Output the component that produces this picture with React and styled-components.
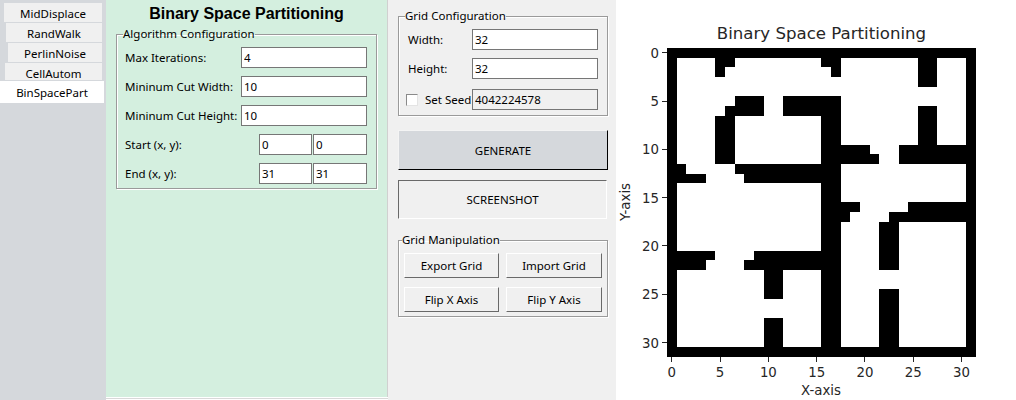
import * as React from "react";
import styled, { createGlobalStyle } from "styled-components";

const GlobalStyle = createGlobalStyle`
  html, body { margin: 0; padding: 0; background: #fff; }
  body { font-family: "Noto Sans", "Open Sans", sans-serif; font-size: 11.5px; color: #000; }
`;

const Page = styled.div`
  display: flex;
  width: 1016px;
  height: 400px;
  overflow: hidden;
`;

const Sidebar = styled.nav`
  width: 106px;
  flex: none;
  background: #d5d8dc;
  padding-top: 3px;
  box-sizing: border-box;
`;

const Tab = styled.div`
  height: ${(p) => p.$h}px;
  margin: 0 ${(p) => (p.$active ? 2 : 4)}px ${(p) => (p.$active ? 0 : 1)}px ${(p) => p.$left}px;
  padding-top: ${(p) => p.$drop}px;
  box-sizing: border-box;
  background: ${(p) => (p.$active ? "#fff" : "#f0f0f0")};
  display: flex;
  align-items: center;
  justify-content: center;
`;

const AlgoPanel = styled.section`
  width: 282px;
  height: 397px;
  flex: none;
  background: #d4efdf;
  border-right: 1px solid #d0d0d0;
  box-shadow: 0 1px 0 #fff, 0 2px 0 #d8d8d8;
  padding: 0 10px;
  box-sizing: border-box;
`;

const Title = styled.h1`
  margin: 0;
  height: 26px;
  font: bold 16px/27px "Liberation Sans", Arial, sans-serif;
  text-align: center;
`;

const Group = styled.fieldset`
  margin: 0;
  min-width: 0;
  border: 1px solid #9a9a9a;
  box-shadow: 1px 1px 0 #fff, inset 1px 1px 0 #fff;
  padding: 5px 8px ${(p) => p.$bottom}px 8px;
  display: flex;
  flex-direction: column;
  gap: 8px;
`;

const Legend = styled.legend`
  padding: 0;
  margin-left: -2px;
  height: 16px;
  line-height: 15px;
`;

const Row = styled.div`
  display: grid;
  grid-template-columns: ${(p) => p.$cols};
  align-items: center;
  height: 21px;
`;

const Label = styled.label`
  white-space: nowrap;
  padding-left: ${(p) => p.$indent || 0}px;
`;

const Field = styled.input`
  box-sizing: border-box;
  width: 100%;
  height: 21px;
  margin: 0;
  border: 1px solid #767676;
  border-radius: 0;
  outline: none;
  padding: 0 2px;
  font: inherit;
  color: #000;
  background: ${(p) => (p.$off ? "#f0f0f0" : "#fff")};
`;

const Pair = styled.div`
  display: grid;
  grid-template-columns: 53px 54px;
  gap: 1px;
`;

const ControlPanel = styled.section`
  width: 228px;
  flex: none;
  background: #f0f0f0;
  padding: 8px 8px 0 10px;
  box-sizing: border-box;
  display: flex;
  flex-direction: column;
`;

const SeedRow = styled(Row)`
  margin-top: 2px;
`;

const SeedBox = styled.input`
  appearance: none;
  width: 12px;
  height: 12px;
  margin: 0 0 0 -1px;
  background: #fff;
  border: 1px solid #8a8a8a;
  border-right-color: #e4e4e4;
  border-bottom-color: #e4e4e4;
  box-sizing: border-box;
`;

const BigButton = styled.button`
  box-sizing: border-box;
  display: block;
  width: ${(p) => (p.$primary ? 210 : 209)}px;
  height: ${(p) => (p.$primary ? 40 : 39)}px;
  margin-top: ${(p) => (p.$primary ? 14 : 10)}px;
  font: inherit;
  color: #000;
  background: ${(p) => (p.$primary ? "#d5d8dc" : "#f0f0f0")};
  border: 1px solid;
  border-color: ${(p) =>
    p.$primary ? "#f4f4f4 #000 #000 #f4f4f4" : "#696969 #fff #fff #696969"};
`;

const ManipGroup = styled(Group)`
  margin-top: 13px;
  padding: 5px 4px 4px 5px;
  display: grid;
  grid-template-columns: 95px 96px;
  column-gap: ${(p) => p.$gap}px;
  row-gap: 9px;
`;

const SmallButton = styled.button`
  box-sizing: border-box;
  height: 25px;
  width: 100%;
  padding: 0;
  font: inherit;
  color: #000;
  background: #f0f0f0;
  border: 1px solid;
  border-color: #fff #696969 #696969 #fff;
`;

const PlotPanel = styled.section`
  width: 400px;
  height: 400px;
  flex: none;
  background: #fff;
`;

const PlotSvg = styled.svg`
  display: block;
  text {
    font-family: "DejaVu Sans", sans-serif;
    fill: #262626;
  }
`;

// black runs per row of the 32x32 grid, [first col, last col]
const GRID = [
  [[0, 31]],
  [[0, 0], [5, 6], [16, 17], [26, 27], [31, 31]],
  [[0, 0], [5, 5], [17, 17], [26, 27], [31, 31]],
  [[0, 0], [26, 27], [31, 31]],
  [[0, 0], [31, 31]],
  [[0, 0], [7, 9], [12, 17], [31, 31]],
  [[0, 0], [6, 9], [12, 17], [26, 27], [31, 31]],
  [[0, 0], [5, 6], [16, 17], [26, 27], [31, 31]],
  [[0, 0], [5, 6], [16, 17], [26, 27], [31, 31]],
  [[0, 0], [5, 6], [16, 17], [26, 27], [31, 31]],
  [[0, 0], [5, 6], [16, 20], [24, 31]],
  [[0, 0], [5, 6], [16, 21], [24, 31]],
  [[0, 1], [7, 17], [31, 31]],
  [[0, 3], [8, 17], [31, 31]],
  [[0, 0], [16, 17], [31, 31]],
  [[0, 0], [16, 17], [31, 31]],
  [[0, 0], [16, 19], [25, 31]],
  [[0, 0], [16, 18], [23, 31]],
  [[0, 0], [16, 17], [22, 23], [31, 31]],
  [[0, 0], [16, 17], [22, 23], [31, 31]],
  [[0, 0], [16, 17], [22, 23], [31, 31]],
  [[0, 4], [9, 17], [22, 23], [31, 31]],
  [[0, 3], [8, 17], [22, 23], [31, 31]],
  [[0, 0], [10, 11], [16, 17], [31, 31]],
  [[0, 0], [10, 11], [16, 17], [31, 31]],
  [[0, 0], [10, 11], [16, 17], [22, 23], [31, 31]],
  [[0, 0], [16, 17], [22, 23], [31, 31]],
  [[0, 0], [16, 17], [22, 23], [31, 31]],
  [[0, 0], [10, 11], [16, 17], [22, 23], [31, 31]],
  [[0, 0], [10, 11], [16, 17], [22, 23], [31, 31]],
  [[0, 0], [10, 11], [16, 17], [22, 23], [31, 31]],
  [[0, 31]],
];

const AX = 51;
const AY = 48;
const CELL = 9.656;
const TICKS = [0, 5, 10, 15, 20, 25, 30];

function BspPlot() {
  const mid = (i) => CELL * i + CELL / 2;
  return (
    <PlotSvg width="400" height="400" viewBox="0 0 400 400">
      <text x="205.5" y="39" fontSize="16.6" textAnchor="middle">Binary Space Partitioning</text>
      <rect x={AX} y={AY} width={CELL * 32} height={CELL * 32} fill="#fff" />
      <g shapeRendering="crispEdges">
        {GRID.map((runs, r) =>
          runs.map(([a, b]) => (
            <rect key={`${r}-${a}`} x={AX + a * CELL} y={AY + r * CELL} width={(b - a + 1) * CELL} height={CELL} fill="#000" />
          ))
        )}
        {TICKS.map((t) => (
          <g key={t} stroke="#262626" strokeWidth="1">
            <line x1={AX - 5} x2={AX} y1={AY + mid(t)} y2={AY + mid(t)} />
            <line y1={AY + CELL * 32} y2={AY + CELL * 32 + 5} x1={AX + mid(t)} x2={AX + mid(t)} />
          </g>
        ))}
      </g>
      {TICKS.map((t) => (
        <React.Fragment key={t}>
          <text x={AX - 8} y={AY + mid(t) + 5} fontSize="13.33" textAnchor="end">{t}</text>
          <text x={AX + mid(t)} y="377" fontSize="13.33" textAnchor="middle">{t}</text>
        </React.Fragment>
      ))}
      <text x="205" y="395" fontSize="13.33" textAnchor="middle">X-axis</text>
      <text transform="translate(14 202) rotate(-90)" fontSize="13.33" textAnchor="middle">Y-axis</text>
    </PlotSvg>
  );
}

const TABS = [
  { name: "MidDisplace", left: 4, h: 19, drop: 2 },
  { name: "RandWalk", left: 6, h: 19, drop: 1 },
  { name: "PerlinNoise", left: 8, h: 19, drop: 2 },
  { name: "CellAutom", left: 5, h: 17, drop: 3 },
  { name: "BinSpacePart", left: 0, h: 22, drop: 1, active: true },
];

export default function App() {
  return (
    <Page>
      <GlobalStyle />
      <Sidebar>
        {TABS.map((t) => (
          <Tab key={t.name} $left={t.left} $h={t.h} $drop={t.drop} $active={t.active}>{t.name}</Tab>
        ))}
      </Sidebar>
      <AlgoPanel>
        <Title>Binary Space Partitioning</Title>
        <Group $bottom={4}>
          <Legend>Algorithm Configuration</Legend>
          <Row $cols="116px 126px">
            <Label>Max Iterations:</Label>
            <Field defaultValue="4" />
          </Row>
          <Row $cols="116px 126px">
            <Label>Mininum Cut Width:</Label>
            <Field defaultValue="10" />
          </Row>
          <Row $cols="116px 126px">
            <Label>Mininum Cut Height:</Label>
            <Field defaultValue="10" />
          </Row>
          <Row $cols="134px 108px">
            <Label>Start (x, y):</Label>
            <Pair>
              <Field defaultValue="0" />
              <Field defaultValue="0" />
            </Pair>
          </Row>
          <Row $cols="134px 108px">
            <Label>End (x, y):</Label>
            <Pair>
              <Field defaultValue="31" />
              <Field defaultValue="31" />
            </Pair>
          </Row>
        </Group>
      </AlgoPanel>
      <ControlPanel>
        <Group $bottom={5}>
          <Legend>Grid Configuration</Legend>
          <Row $cols="65px 126px">
            <Label $indent={1}>Width:</Label>
            <Field defaultValue="32" />
          </Row>
          <Row $cols="65px 126px">
            <Label $indent={1}>Height:</Label>
            <Field defaultValue="32" />
          </Row>
          <SeedRow $cols="18px 47px 126px">
            <SeedBox type="checkbox" />
            <Label>Set Seed</Label>
            <Field $off defaultValue="4042224578" readOnly />
          </SeedRow>
        </Group>
        <BigButton $primary>GENERATE</BigButton>
        <BigButton>SCREENSHOT</BigButton>
        <ManipGroup $gap={7}>
          <Legend>Grid Manipulation</Legend>
          <SmallButton>Export Grid</SmallButton>
          <SmallButton>Import Grid</SmallButton>
          <SmallButton>Flip X Axis</SmallButton>
          <SmallButton>Flip Y Axis</SmallButton>
        </ManipGroup>
      </ControlPanel>
      <PlotPanel>
        <BspPlot />
      </PlotPanel>
    </Page>
  );
}
